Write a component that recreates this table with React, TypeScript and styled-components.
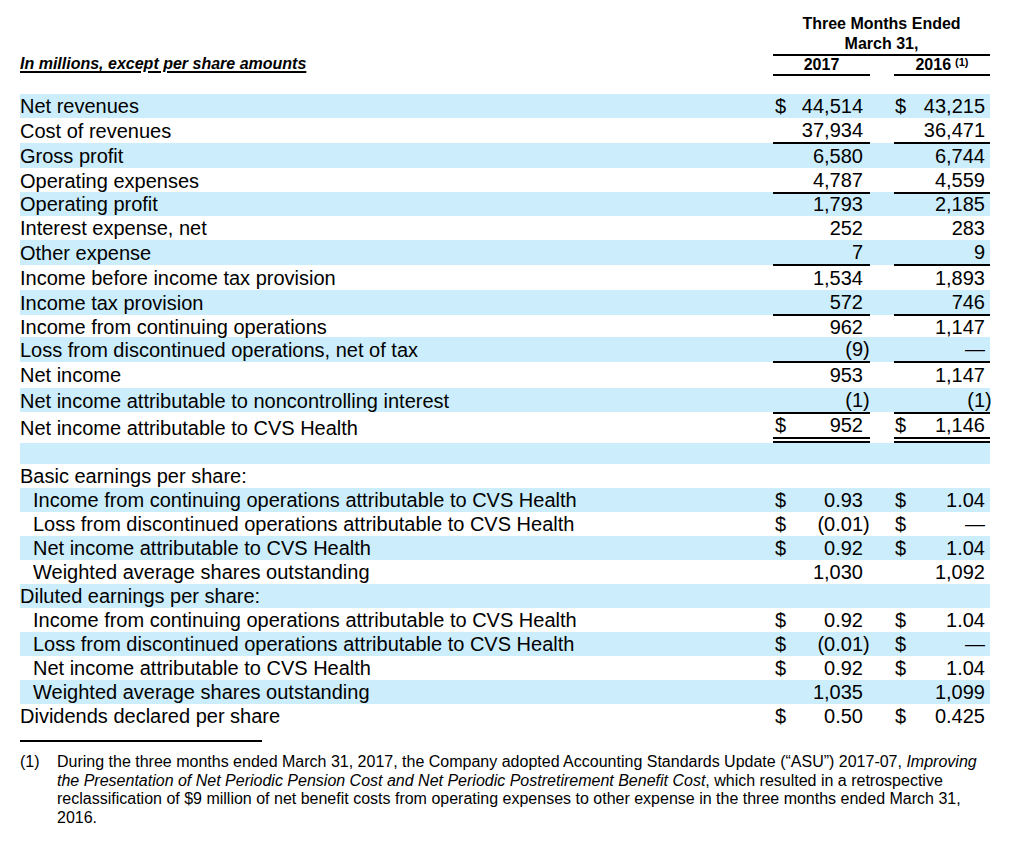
import React from 'react';
import styled, { createGlobalStyle } from 'styled-components';

const GlobalStyle = createGlobalStyle`
  html,
  body {
    background: #fff;
    margin: 0;
    padding: 0;
  }

  body {
    color: #000;
    font-family: 'Liberation Sans', Arial, Helvetica, sans-serif;
  }
`;

const COLUMNS = '1fr 97px 24px 96px';
const SHADE = '#cceefc';

const Page = styled.div`
  padding: 14px 20px 0;
  width: 970px;
`;

const Header = styled.div`
  display: grid;
  font-size: 16px;
  font-weight: bold;
  grid-template-columns: ${COLUMNS};
  grid-template-rows: 42px 20px;
  margin-bottom: 18px;
`;

const Caption = styled.div`
  align-self: end;
  font-style: italic;
  grid-column: 1;
  grid-row: 1 / 3;
  line-height: 18px;
  padding-bottom: 3px;
  text-decoration: underline;
  text-decoration-thickness: 2px;
  text-underline-offset: 2px;
`;

const Period = styled.div`
  border-bottom: 2px solid #000;
  grid-column: 2 / 5;
  grid-row: 1;
  line-height: 20px;
  text-align: center;
`;

const Year = styled.div<{ $col: number }>`
  border-bottom: 2px solid #000;
  grid-column: ${(p) => p.$col};
  grid-row: 2;
  height: 18px;
  line-height: 18px;
  text-align: center;
`;

const Note = styled.sup`
  font-size: 11px;
  line-height: 0;
  margin-left: 4px;
  vertical-align: 4px;
`;

const Row = styled.div<{ $shade?: boolean; $h: number }>`
  background: ${(p) => (p.$shade ? SHADE : 'transparent')};
  display: grid;
  font-size: 20px;
  grid-template-columns: ${COLUMNS};
  height: ${(p) => p.$h}px;
  line-height: 24px;
`;

const Label = styled.div<{ $indent?: boolean }>`
  align-items: center;
  display: flex;
  padding-left: ${(p) => (p.$indent ? 13 : 0)}px;
  white-space: nowrap;
`;

type Rule = 'single' | 'double' | undefined;

const Cell = styled.div<{ $col: number; $rule: Rule }>`
  align-items: center;
  border-bottom: ${(p) =>
    p.$rule === 'double' ? '6px double #000' : p.$rule === 'single' ? '2px solid #000' : 'none'};
  box-sizing: border-box;
  display: flex;
  grid-column: ${(p) => p.$col};
  padding: 0 ${(p) => (p.$col === 2 ? 7 : 5)}px 0 ${(p) => (p.$col === 2 ? 2 : 1)}px;
`;

const Num = styled.span`
  margin-left: auto;
  white-space: nowrap;
`;

const Close = styled.span`
  margin-right: -6.7px;
`;

const Rule = styled.div`
  background: #000;
  height: 2px;
  margin-top: 12px;
  width: 242px;
`;

const Footnote = styled.div`
  display: grid;
  font-size: 16px;
  grid-template-columns: 37px 933px;
  line-height: 18.5px;
  margin-top: 11px;
`;

type Line = {
  label: string;
  a?: string;
  b?: string;
  dollar?: boolean;
  rule?: Rule;
  shade?: boolean;
  h?: number;
  indent?: boolean;
};

const lines: Line[] = [
  { label: 'Net revenues', a: '44,514', b: '43,215', dollar: true, shade: true, h: 24 },
  { label: 'Cost of revenues', a: '37,934', b: '36,471', rule: 'single', h: 25 },
  { label: 'Gross profit', a: '6,580', b: '6,744', shade: true, h: 25 },
  { label: 'Operating expenses', a: '4,787', b: '4,559', rule: 'single', h: 24 },
  { label: 'Operating profit', a: '1,793', b: '2,185', shade: true, h: 24 },
  { label: 'Interest expense, net', a: '252', b: '283', h: 24 },
  { label: 'Other expense', a: '7', b: '9', rule: 'single', shade: true, h: 25 },
  { label: 'Income before income tax provision', a: '1,534', b: '1,893', h: 25 },
  { label: 'Income tax provision', a: '572', b: '746', rule: 'single', shade: true, h: 25 },
  { label: 'Income from continuing operations', a: '962', b: '1,147', h: 22 },
  { label: 'Loss from discontinued operations, net of tax', a: '(9)', b: '—', rule: 'single', shade: true, h: 25 },
  { label: 'Net income', a: '953', b: '1,147', h: 26 },
  { label: 'Net income attributable to noncontrolling interest', a: '(1)', b: '(1)', rule: 'single', shade: true, h: 24 },
  { label: 'Net income attributable to CVS Health', a: '952', b: '1,146', dollar: true, rule: 'double', h: 31 },
  { label: '', shade: true, h: 21 },
  { label: 'Basic earnings per share:' },
  { label: 'Income from continuing operations attributable to CVS Health', a: '0.93', b: '1.04', dollar: true, shade: true, indent: true },
  { label: 'Loss from discontinued operations attributable to CVS Health', a: '(0.01)', b: '—', dollar: true, indent: true },
  { label: 'Net income attributable to CVS Health', a: '0.92', b: '1.04', dollar: true, shade: true, indent: true },
  { label: 'Weighted average shares outstanding', a: '1,030', b: '1,092', indent: true },
  { label: 'Diluted earnings per share:', shade: true },
  { label: 'Income from continuing operations attributable to CVS Health', a: '0.92', b: '1.04', dollar: true, indent: true },
  { label: 'Loss from discontinued operations attributable to CVS Health', a: '(0.01)', b: '—', dollar: true, shade: true, indent: true },
  { label: 'Net income attributable to CVS Health', a: '0.92', b: '1.04', dollar: true, indent: true },
  { label: 'Weighted average shares outstanding', a: '1,035', b: '1,099', shade: true, indent: true },
  { label: 'Dividends declared per share', a: '0.50', b: '0.425', dollar: true },
];

function Amount({ value }: { value: string }) {
  if (value.endsWith(')')) {
    return (
      <Num>
        {value.slice(0, -1)}
        <Close>)</Close>
      </Num>
    );
  }
  return <Num>{value}</Num>;
}

function Value({ col, value, line }: { col: number; value?: string; line: Line }) {
  return (
    <Cell $col={col} $rule={line.rule}>
      {value && line.dollar && <span>$</span>}
      {value && <Amount value={value} />}
    </Cell>
  );
}

export default function App(): JSX.Element {
  return (
    <>
      <GlobalStyle />
      <Page>
        <Header>
          <Caption>In millions, except per share amounts</Caption>
          <Period>
            Three Months Ended
            <br />
            March 31,
          </Period>
          <Year $col={2}>2017</Year>
          <Year $col={4}>
            2016<Note>(1)</Note>
          </Year>
        </Header>

        {lines.map((line, i) => (
          <Row key={i} $shade={line.shade} $h={line.h ?? 24}>
            <Label $indent={line.indent}>{line.label}</Label>
            {line.a !== undefined || line.rule ? (
              <>
                <Value col={2} value={line.a} line={line} />
                <Value col={4} value={line.b} line={line} />
              </>
            ) : null}
          </Row>
        ))}

        <Rule />
        <Footnote>
          <span>(1)</span>
          <span>
            During the three months ended March 31, 2017, the Company adopted Accounting Standards
            Update (“ASU”) 2017-07,{' '}
            <i>
              Improving the Presentation of Net Periodic Pension Cost and Net Periodic Postretirement
              Benefit Cost
            </i>
            , which resulted in a retrospective reclassification of $9 million of net benefit costs
            from operating expenses to other expense in the three months ended March 31, 2016.
          </span>
        </Footnote>
      </Page>
    </>
  );
}
